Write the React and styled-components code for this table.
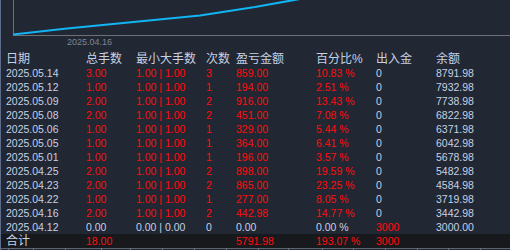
import styled, { createGlobalStyle } from 'styled-components';

const GlobalStyle = createGlobalStyle`
	html, body {
		margin: 0;
		padding: 0;
		background: #212733;
	}
	body {
		font-family: "Liberation Sans", "Noto Sans CJK SC", sans-serif;
	}
`;

const rows = [
	['2025.05.14', '3.00', '1.00 | 1.00', '3', '859.00', '10.83 %', '0', '8791.98'],
	['2025.05.12', '1.00', '1.00 | 1.00', '1', '194.00', '2.51 %', '0', '7932.98'],
	['2025.05.09', '2.00', '1.00 | 1.00', '2', '916.00', '13.43 %', '0', '7738.98'],
	['2025.05.08', '2.00', '1.00 | 1.00', '2', '451.00', '7.08 %', '0', '6822.98'],
	['2025.05.06', '1.00', '1.00 | 1.00', '1', '329.00', '5.44 %', '0', '6371.98'],
	['2025.05.05', '1.00', '1.00 | 1.00', '1', '364.00', '6.41 %', '0', '6042.98'],
	['2025.05.01', '1.00', '1.00 | 1.00', '1', '196.00', '3.57 %', '0', '5678.98'],
	['2025.04.25', '2.00', '1.00 | 1.00', '2', '898.00', '19.59 %', '0', '5482.98'],
	['2025.04.23', '2.00', '1.00 | 1.00', '2', '865.00', '23.25 %', '0', '4584.98'],
	['2025.04.22', '1.00', '1.00 | 1.00', '1', '277.00', '8.05 %', '0', '3719.98'],
	['2025.04.16', '2.00', '1.00 | 1.00', '2', '442.98', '14.77 %', '0', '3442.98'],
];

const headers = ['日期', '总手数', '最小大手数', '次数', '盈亏金额', '百分比%', '出入金', '余额'];

const ticks = [8, 33, 65, 101, 130, 162, 194, 226, 258, 288, 322, 353, 385, 417, 448, 480];

// 资金曲线 + 统计表
const App = () => {
	return (
		<Wrapper>
			<GlobalStyle />
			<Chart>
				<svg width="510" height="36" viewBox="0 0 510 36">
					<line x1="13.5" y1="0" x2="13.5" y2="35" stroke="#6f6f75" strokeWidth="1" />
					<line x1="13" y1="35.5" x2="510" y2="35.5" stroke="#6f6f75" strokeWidth="1" />
					<polyline
						points="13,34.5 67,28.5 200,15.5 255,7 300,-1"
						fill="none"
						stroke="#12b4f2"
						strokeWidth="2.2"
					/>
				</svg>
			</Chart>
			<AxisLabel>2025.04.16</AxisLabel>
			<Row>
				{headers.map(h => (
					<Head key={h}>{h}</Head>
				))}
			</Row>
			{rows.map(r => (
				<Row key={r[0]}>
					<Cell>{r[0]}</Cell>
					<Cell $red>{r[1]}</Cell>
					<Cell $red>{r[2]}</Cell>
					<Cell $red>{r[3]}</Cell>
					<Cell $red>{r[4]}</Cell>
					<Cell $red>{r[5]}</Cell>
					<Cell>{r[6]}</Cell>
					<Cell>{r[7]}</Cell>
				</Row>
			))}
			<Row>
				<Cell>2025.04.12</Cell>
				<Cell>0.00</Cell>
				<Cell>0.00 | 0.00</Cell>
				<Cell>0</Cell>
				<Cell>0.00</Cell>
				<Cell>0.00 %</Cell>
				<Cell $red>3000</Cell>
				<Cell>3000.00</Cell>
			</Row>
			<TotalRow>
				<Head>合计</Head>
				<Cell $red>18.00</Cell>
				<Cell />
				<Cell />
				<Cell $red>5791.98</Cell>
				<Cell $red>193.07 %</Cell>
				<Cell $red>3000</Cell>
				<Cell />
			</TotalRow>
			<Scale>
				<svg width="510" height="3" viewBox="0 0 510 3">
					<line x1="0" y1="0.5" x2="510" y2="0.5" stroke="#5c6270" strokeWidth="1" />
					{ticks.map(x => (
						<line
							key={x}
							x1={x + 0.5}
							y1="0"
							x2={x + 0.5}
							y2="3"
							stroke={x === 101 ? '#2fb34a' : '#6a7080'}
							strokeWidth="1"
						/>
					))}
				</svg>
			</Scale>
		</Wrapper>
	);
};

export default App;

const Wrapper = styled.div`
	width: 510px;
	height: 250px;
	overflow: hidden;
	box-sizing: border-box;
	border-left: 1px solid #5d6c88;
	background: #212733;
	display: flex;
	flex-direction: column;
`;

const Chart = styled.div`
	height: 36px;
	margin-left: -1px;
	svg {
		display: block;
	}
`;

const AxisLabel = styled.div`
	height: 12px;
	line-height: 12px;
	margin-bottom: 4px;
	padding-left: 66px;
	font-size: 9px;
	color: #7e8696;
`;

const Row = styled.div`
	display: grid;
	grid-template-columns: 80px 50px 70px 30px 80px 60px 60px 1fr;
	height: 14px;
	line-height: 14px;
	padding-left: 5px;
	white-space: nowrap;
`;

const TotalRow = styled(Row)`
	background: #17191c;
	margin-left: -1px;
	padding-left: 6px;
`;

const Head = styled.div`
	font-size: 12px;
	color: #c6d1e3;
`;

const Cell = styled.div`
	font-size: 10.5px;
	color: ${({ $red }) => ($red ? '#ff0d0d' : '#c6d1e3')};
`;

const Scale = styled.div`
	height: 2px;
	margin-left: -1px;
	svg {
		display: block;
	}
`;
